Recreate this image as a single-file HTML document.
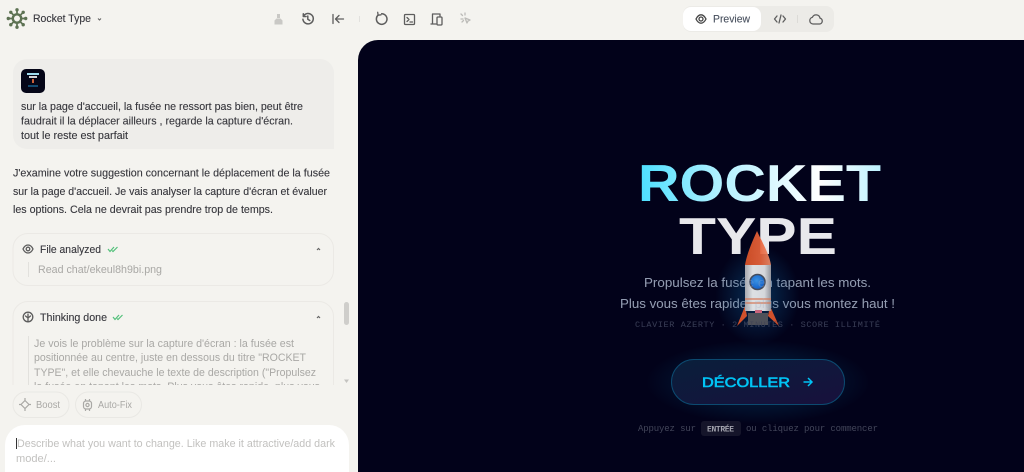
<!DOCTYPE html>
<html lang="fr">
<head>
<meta charset="utf-8">
<title>Rocket Type</title>
<style>
html,body{margin:0;padding:0;width:1024px;height:472px;overflow:hidden;background:#f4f3ef}
svg{display:block}
text{font-family:"Liberation Sans",sans-serif;font-size:11px;fill:#36363c;stroke:#36363c;stroke-width:.12}
.m{font-family:"Liberation Mono",monospace;stroke:none}
.g{fill:#a9a8a5;stroke:none}
.i{fill:none;stroke:#5d5d5d;stroke-width:1.3;stroke-linecap:round;stroke-linejoin:round}
</style>
</head>
<body>
<svg width="1024" height="472" viewBox="0 0 1024 472" xmlns="http://www.w3.org/2000/svg">
<defs>
<linearGradient id="title" gradientUnits="userSpaceOnUse" x1="638" y1="0" x2="881" y2="0">
<stop offset="0" stop-color="#4adfff"/><stop offset=".35" stop-color="#b5f1ff"/><stop offset=".75" stop-color="#ffffff"/><stop offset="1" stop-color="#bdf2ff"/>
</linearGradient>
<linearGradient id="btn" x1="0" y1="0" x2="1" y2="1">
<stop offset="0" stop-color="#091f3b"/><stop offset="1" stop-color="#18103c"/>
</linearGradient>
<linearGradient id="body" x1="0" y1="0" x2="1" y2="0">
<stop offset="0" stop-color="#b5b5b9"/><stop offset=".3" stop-color="#f0f0f0"/><stop offset=".75" stop-color="#e6e6e8"/><stop offset="1" stop-color="#a0a0a6"/>
</linearGradient>
<linearGradient id="nose" x1="0" y1="0" x2="1" y2="0">
<stop offset="0" stop-color="#dc5226"/><stop offset=".6" stop-color="#e9633a"/><stop offset="1" stop-color="#ee8a68"/>
</linearGradient>
<radialGradient id="glow">
<stop offset="0" stop-color="#0c5f96" stop-opacity=".5"/><stop offset="1" stop-color="#0c5f96" stop-opacity="0"/>
</radialGradient>
<radialGradient id="win" cx=".45" cy=".4" r=".65">
<stop offset="0" stop-color="#3f9cf0"/><stop offset="1" stop-color="#0f5fd0"/>
</radialGradient>
<radialGradient id="btnGlow">
<stop offset=".6" stop-color="#00a0e0" stop-opacity=".1"/><stop offset="1" stop-color="#00a0e0" stop-opacity="0"/>
</radialGradient>
<clipPath id="panel"><path d="M378 40H1024V472H358V60A20 20 0 0 1 378 40Z"/></clipPath>
<clipPath id="chat"><rect x="0" y="40" width="340" height="345"/></clipPath>
</defs>

<rect width="1024" height="472" fill="#f4f3ef"/>

<!-- logo -->
<g fill="none" stroke="#5d7253" stroke-linecap="round">
<circle cx="17" cy="18.500" r="4.200" stroke-width="2.400"/>
<path stroke-width="1.700" d="M17 13V10M17 24V27M11.500 18.500H8.500M22.500 18.500H25.500M13 14.500L11 12.500M21 14.500L23 12.500M13 22.500L11 24.500M21 22.500L23 24.500"/>
</g>
<g fill="#5d7253"><circle cx="17" cy="9.800" r="1.700"/><circle cx="17" cy="27.200" r="1.700"/><circle cx="8.300" cy="18.500" r="1.700"/><circle cx="25.700" cy="18.500" r="1.700"/><circle cx="10.800" cy="12.300" r="1.700"/><circle cx="23.200" cy="12.300" r="1.700"/><circle cx="10.800" cy="24.700" r="1.700"/><circle cx="23.200" cy="24.700" r="1.700"/></g>
<text x="33" y="22" textLength="58" lengthAdjust="spacingAndGlyphs">Rocket Type</text>
<path d="M98 18.500l1.500 1.500 1.500-1.500" fill="none" stroke="#666" stroke-width="1.100"/>

<!-- toolbar -->
<g fill="#c9c8c5"><path d="M277 14h3v4h-3zM274.500 24.500v-4l2-2h4l2 2v4z"/></g>
<g class="i"><path d="M303.500 16.200a5.200 5.200 0 1 1-.6 3M303.300 13.800v2.700h2.800M307.800 16v3.200l2 1.300" stroke-width="1.500" style="stroke-width:1.500"/></g>
<g class="i"><path d="M333 14.500v9M343.500 19h-7.500M339 15.500 335.500 19l3.500 3.500"/></g>
<path d="M359.500 16v6" stroke="#e2e1de"/>
<g class="i"><path d="M381.700 13.700A5.300 5.300 0 1 1 378.100 15.100" style="stroke-width:1.500"/><path d="M377.700 12.300l.4 2.900 2.900-.4"/></g>
<g class="i"><rect x="404.500" y="14.500" width="10" height="10" rx="1"/><path d="M407 17.500l2 2-2 2M410 22h2.500"/></g>
<g class="i"><path d="M432.500 23.500v-9.500h7.500v2M431 24h5"/><rect x="437" y="17" width="5" height="8" rx="1"/></g>
<g class="i" style="stroke:#bcbbb8"><path d="M461 14l1.500 1.500M465 13v2M461 19h2M462 22l1.500-1.500"/><path d="M465 18l5 2-2 1-1 2z"/></g>

<!-- tabs -->
<rect x="683" y="6" width="151" height="26" rx="8" fill="#ecebe7"/>
<rect x="683" y="7" width="78" height="24" rx="8" fill="#fff"/>
<g class="i" style="stroke:#444"><path d="M696 19c1.500-3 3.200-4.200 5-4.200s3.500 1.200 5 4.200c-1.500 3-3.200 4.200-5 4.200s-3.500-1.200-5-4.200z"/><circle cx="701" cy="19" r="2"/></g>
<text x="713" y="22.500" textLength="37" lengthAdjust="spacingAndGlyphs" style="fill:#48505e;stroke:#48505e">Preview</text>
<g class="i"><path d="M777 16l-2.500 3 2.500 3M783 16l2.500 3-2.500 3M781 15l-2 8"/></g>
<path d="M797.500 15v8" stroke="#dcdbd7"/>
<g class="i"><path d="M813 24h6.500a3 3 0 0 0 .5-5.900 4 4 0 0 0-7.600-.8 3.400 3.400 0 0 0 .6 6.700z"/></g>

<!-- chat -->
<g clip-path="url(#chat)">
<path d="M27 59H320a14 14 0 0 1 14 14V149H27a14 14 0 0 1-14-14V73a14 14 0 0 1 14-14Z" fill="#eeedea"/>
<rect x="21" y="69" width="24" height="24" rx="5" fill="#050618"/>
<rect x="27" y="73" width="12" height="2" fill="#9fdcf0"/><rect x="29" y="76" width="8" height="2" fill="#d5d5d8"/><rect x="32" y="79" width="2" height="4" fill="#c9603a"/><rect x="28" y="85" width="10" height="2" fill="#124a70"/>
<text x="21" y="110" textLength="282" lengthAdjust="spacingAndGlyphs">sur la page d'accueil, la fusée ne ressort pas bien, peut être</text>
<text x="21" y="124.500" textLength="272" lengthAdjust="spacingAndGlyphs">faudrait il la déplacer ailleurs , regarde la capture d'écran.</text>
<text x="21" y="139" textLength="107" lengthAdjust="spacingAndGlyphs">tout le reste est parfait</text>

<text x="13" y="176.500" textLength="317" lengthAdjust="spacingAndGlyphs">J'examine votre suggestion concernant le déplacement de la fusée</text>
<text x="13" y="195" textLength="314" lengthAdjust="spacingAndGlyphs">sur la page d'accueil. Je vais analyser la capture d'écran et évaluer</text>
<text x="13" y="213" textLength="260" lengthAdjust="spacingAndGlyphs">les options. Cela ne devrait pas prendre trop de temps.</text>

<rect x="13" y="233.500" width="320.500" height="52" rx="15" fill="none" stroke="#ebe9e5"/>
<g class="i"><path d="M23 249c1.300-2.800 3-4 5-4s3.700 1.200 5 4c-1.300 2.800-3 4-5 4s-3.700-1.200-5-4z"/><circle cx="28" cy="249" r="1.800"/></g>
<text x="40" y="253" textLength="61" lengthAdjust="spacingAndGlyphs">File analyzed</text>
<path d="M108 249l2 2.500 4-4.500M112 250.500l1 1 4.500-4.500" fill="none" stroke="#52c07a" stroke-width="1.200"/>
<path d="M317 250l1.500-1.500 1.500 1.500" fill="none" stroke="#666" stroke-width="1.200"/>
<path d="M28.500 262v15" stroke="#e2e1dd"/>
<text class="g" x="38" y="273" textLength="124" lengthAdjust="spacingAndGlyphs">Read chat/ekeul8h9bi.png</text>

<rect x="13" y="301.500" width="320.500" height="120" rx="15" fill="none" stroke="#ebe9e5"/>
<g class="i"><circle cx="28" cy="317" r="4.800"/><path d="M28 314v7M25.500 316l2.500 2 2.500-2"/></g>
<text x="40" y="321" textLength="67" lengthAdjust="spacingAndGlyphs">Thinking done</text>
<path d="M113 317l2 2.500 4-4.500M117 318.500l1 1 4.500-4.500" fill="none" stroke="#52c07a" stroke-width="1.200"/>
<path d="M317 318l1.500-1.500 1.500 1.500" fill="none" stroke="#666" stroke-width="1.200"/>
<path d="M28.500 336v50" stroke="#e2e1dd"/>
<text class="g" x="34" y="347" textLength="260" lengthAdjust="spacingAndGlyphs">Je vois le problème sur la capture d'écran : la fusée est</text>
<text class="g" x="34" y="361" textLength="272" lengthAdjust="spacingAndGlyphs">positionnée au centre, juste en dessous du titre "ROCKET</text>
<text class="g" x="34" y="376" textLength="282" lengthAdjust="spacingAndGlyphs">TYPE", et elle chevauche le texte de description ("Propulsez</text>
<text class="g" x="34" y="390" textLength="286" lengthAdjust="spacingAndGlyphs">la fusée en tapant les mots. Plus vous êtes rapide, plus vous</text>
</g>

<!-- scrollbar -->
<rect x="344" y="302" width="5" height="23" rx="2.500" fill="#cfcecb"/>
<path d="M344 379.500h5l-2.500 3.500z" fill="#c4c3c0"/>

<!-- pills -->
<rect x="13" y="392" width="56" height="25.500" rx="12.700" fill="none" stroke="#e9e8e4"/>
<path d="M25 400.500l4 4-4 4-4-4z M25 398v2.500M25 408.500v2.500M19 404.500h2M29 404.500h2" fill="none" stroke="#a9a8a5" stroke-width="1.200"/>
<text class="g" x="36" y="408" textLength="24" lengthAdjust="spacingAndGlyphs" style="font-size:10px">Boost</text>
<rect x="75.500" y="392" width="66" height="25.500" rx="12.700" fill="none" stroke="#e9e8e4"/>
<g fill="none" stroke="#a9a8a5" stroke-width="1.200"><rect x="83.500" y="401" width="8" height="8" rx="2.500"/><circle cx="87.500" cy="405" r="1.600"/><path d="M85.500 399v2M89.500 399v2M85.500 409v2M89.500 409v2"/></g>
<text class="g" x="98" y="408" textLength="34" lengthAdjust="spacingAndGlyphs" style="font-size:10px">Auto-Fix</text>

<!-- input -->
<path d="M5 472V445a20 20 0 0 1 20-20H329a20 20 0 0 1 20 20V472Z" fill="#fff"/>
<path d="M16.500 438v11" stroke="#333"/>
<text class="g" x="17" y="447" textLength="318" lengthAdjust="spacingAndGlyphs" style="fill:#c2c1bf">Describe what you want to change. Like make it attractive/add dark</text>
<text class="g" x="16" y="462" textLength="40" lengthAdjust="spacingAndGlyphs" style="fill:#c2c1bf">mode/...</text>

<!-- preview panel -->
<g clip-path="url(#panel)">
<rect x="358" y="40" width="666" height="432" fill="#02021a"/>

<text x="638" y="201" textLength="243" lengthAdjust="spacingAndGlyphs" style="font-size:52px;font-weight:700;fill:url(#title);stroke:none">ROCKET</text>
<text x="679" y="254" textLength="158" lengthAdjust="spacingAndGlyphs" style="font-size:52px;font-weight:700;fill:#e8e8ec;stroke:none">TYPE</text>

<text x="644" y="287" textLength="227" lengthAdjust="spacingAndGlyphs" style="font-size:13px;fill:#929bb0;stroke:none">Propulsez la fusée en tapant les mots.</text>
<text x="620" y="308" textLength="275" lengthAdjust="spacingAndGlyphs" style="font-size:13px;fill:#929bb0;stroke:none">Plus vous êtes rapide, plus vous montez haut !</text>
<text class="m" x="635" y="327" textLength="245" lengthAdjust="spacing" style="font-size:8.500px;fill:#363a52">CLAVIER AZERTY · 2 MINUTES · SCORE ILLIMITÉ</text>

<!-- rocket -->
<ellipse cx="757.500" cy="295" rx="42" ry="50" fill="url(#glow)"/>
<g opacity=".92">
<path d="M745 306L737 326 747 316Z M770 306L779 326 768 316Z" fill="#e2562b"/>
<path d="M748 313h20v12h-20Z" fill="#55565c"/>
<path d="M745 265h26v46h-26Z" fill="url(#body)"/>
<path d="M755 310h7v3h-7Z" fill="#d96a80"/>
<path d="M757 231c4 9 12 22 14 34h-26c2-12 8-25 12-34Z" fill="url(#nose)"/>
<path d="M745 299h26M745 303h26" stroke="#e8805a" stroke-width="1.300"/>
<circle cx="757.500" cy="282" r="7.500" fill="url(#win)" stroke="#4a5060" stroke-width="1.500"/>
</g>
<text x="644" y="287" textLength="227" lengthAdjust="spacingAndGlyphs" style="font-size:13px;fill:#929bb0;stroke:none;opacity:.3">Propulsez la fusée en tapant les mots.</text>
<text x="620" y="308" textLength="275" lengthAdjust="spacingAndGlyphs" style="font-size:13px;fill:#929bb0;stroke:none;opacity:.3">Plus vous êtes rapide, plus vous montez haut !</text>
<text class="m" x="635" y="327" textLength="245" lengthAdjust="spacing" style="font-size:8.500px;fill:#363a52;opacity:.6">CLAVIER AZERTY · 2 MINUTES · SCORE ILLIMITÉ</text>

<!-- button -->
<ellipse cx="758" cy="382" rx="112" ry="42" fill="url(#btnGlow)"/>
<rect x="671.500" y="359.500" width="173" height="45" rx="22.500" fill="url(#btn)" stroke="#0c4a70"/>
<text x="702" y="387" textLength="88" lengthAdjust="spacingAndGlyphs" style="font-size:13.500px;font-weight:400;fill:#00c4f5;stroke:#00c4f5;stroke-width:.6">DÉCOLLER</text>
<path d="M803.500 382h8M808 378l4 4-4 4" fill="none" stroke="#00c4f5" stroke-width="1.500"/>

<!-- hint -->
<text class="m" x="638" y="431" textLength="58" lengthAdjust="spacing" style="font-size:9px;fill:#43465a">Appuyez sur</text>
<rect x="701" y="421" width="40" height="15" rx="3" fill="#15152a"/>
<text class="m" x="707" y="431.500" textLength="27" lengthAdjust="spacing" style="font-size:8px;font-weight:700;fill:#a2a3ad">ENTRÉE</text>
<text class="m" x="746" y="431" textLength="132" lengthAdjust="spacing" style="font-size:9px;fill:#43465a">ou cliquez pour commencer</text>
</g>
</svg>
</body>
</html>
